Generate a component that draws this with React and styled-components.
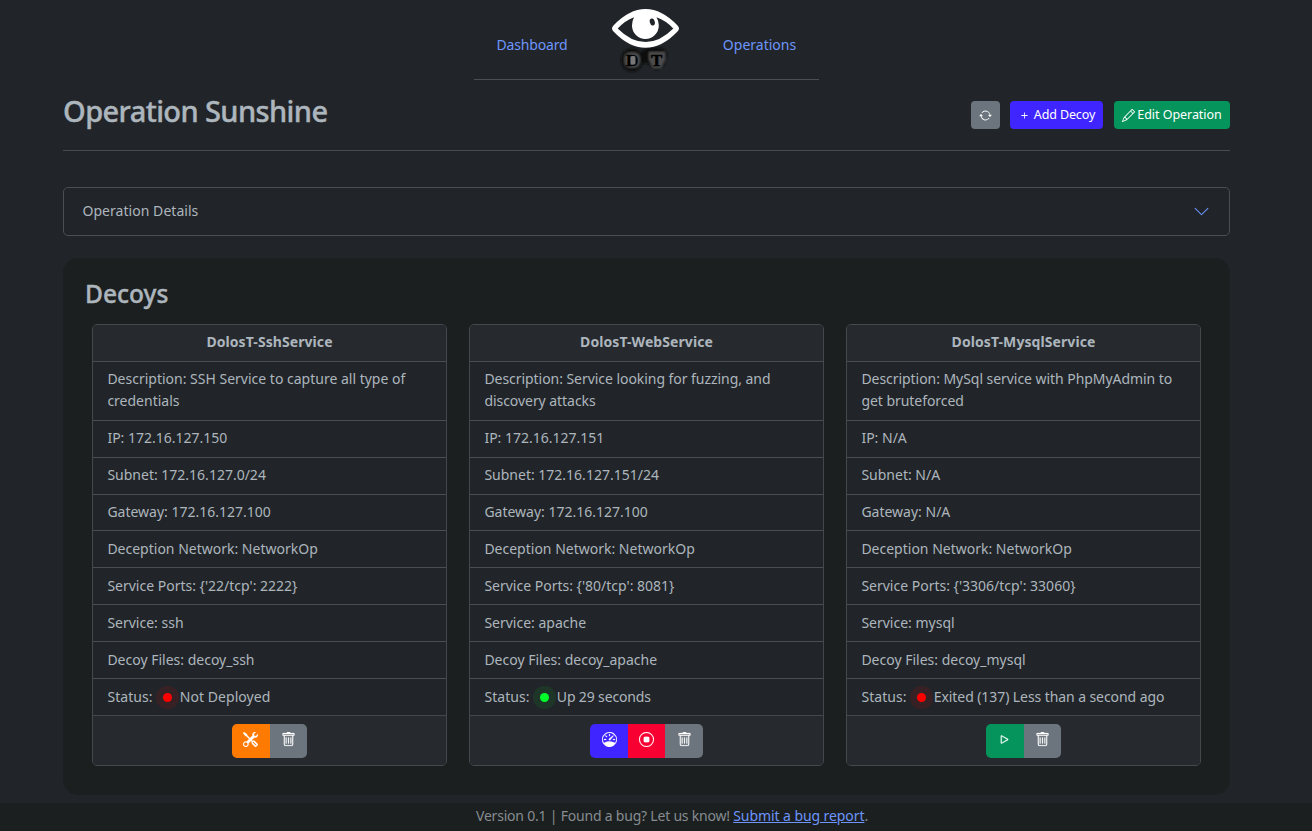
import React from "react";
import styled, { createGlobalStyle } from "styled-components";
import {
  BsArrowRepeat, BsPlus, BsPencil, BsTools, BsTrash, BsSpeedometer, BsStopCircle, BsPlay, BsChevronDown,
} from "react-icons/bs";

const Global = createGlobalStyle`
  *, *::before, *::after { box-sizing: border-box; }
  body {
    margin: 0;
    background: #212529;
    color: #adb5bd;
    font-family: "Noto Sans", "Open Sans", sans-serif;
    font-size: 14px;
    line-height: 22px;
    overflow: hidden;
  }
`;

const Fit = styled.span`
  letter-spacing: ${(p) => p.$ls || 0}px;
  white-space: nowrap;
`;

const Page = styled.div`
  height: 831px;
  display: flex;
  flex-direction: column;
`;

const Nav = styled.nav`
  width: 345px;
  height: 80px;
  margin-left: 474px;
  border-bottom: 1px solid #4a4f53;
  display: grid;
  grid-template-columns: 116px 110px 119px;
  align-items: center;
  justify-items: center;
`;

const NavLink = styled.a`
  color: #6d95fb;
  padding-top: 10px;
`;

const Logo = styled.svg`
  width: 90px;
  height: 80px;
  display: block;
`;

const Main = styled.main`
  width: 1167px;
  margin-left: 63px;
`;

const TitleBar = styled.header`
  height: 71px;
  border-bottom: 1px solid #474c50;
  display: flex;
  justify-content: space-between;
  align-items: flex-start;
`;

const Title = styled.h1`
  margin: 13px 0 0;
  font-size: 29px;
  line-height: 36px;
  font-weight: 500;
  -webkit-text-stroke: 0.4px currentColor;
`;

const Actions = styled.div`
  display: flex;
  padding-top: 21px;
`;

const SmallButton = styled.button`
  width: ${(p) => p.$w}px;
  height: 28px;
  margin-left: ${(p) => p.$gap || 0}px;
  padding: 0;
  border: 0;
  border-radius: 4px;
  background: ${(p) => p.$bg};
  color: #fff;
  font: inherit;
  font-size: 12.5px;
  display: flex;
  align-items: center;
  justify-content: center;
  gap: ${(p) => p.$inner || 0}px;
`;

const Accordion = styled.section`
  height: 49px;
  margin-top: 36px;
  padding: 0 19px 1px 18.5px;
  border: 1px solid #4a4f53;
  border-radius: 5px;
  display: flex;
  align-items: center;
  justify-content: space-between;
  svg { color: #6d95fb; margin-top: 1px; }
`;

const Panel = styled.section`
  height: 537px;
  margin-top: 22px;
  padding: 19px 29px 0;
  background: #1b1f1f;
  border-radius: 15px;
`;

const PanelTitle = styled.h2`
  margin: 0 0 13px -7px;
  font-size: 24.5px;
  line-height: 34px;
  font-weight: 500;
  -webkit-text-stroke: 0.4px currentColor;
`;

const Cards = styled.div`
  display: grid;
  grid-template-columns: repeat(3, 355px);
  gap: 22px;
`;

const Card = styled.article`
  height: 442px;
  border: 1px solid #43484c;
  border-radius: 5px;
  background: #212529;
  overflow: hidden;
  display: flex;
  flex-direction: column;
`;

const CardHead = styled.h3`
  margin: 0;
  height: 35.85px;
  background: #262a2e;
  font-size: 14px;
  line-height: 34px;
  font-weight: 700;
  text-align: center;
`;

const Row = styled.div`
  padding: 6.5px 14.4px 7.4px;
  border-top: 1px solid #494e53;
  display: flex;
  align-items: center;
`;

const StatusRow = styled(Row)`
  padding-top: 7px;
  padding-bottom: 6.9px;
`;

const Dot = styled.i`
  width: 9px;
  height: 9px;
  margin: 1px 7.8px 0 10.5px;
  border-radius: 50%;
  background: ${(p) => p.$color};
  box-shadow: 0 0 0 7px ${(p) => p.$halo};
`;

const CardFoot = styled.footer`
  flex: 1;
  padding-top: 8px;
  border-top: 1px solid #43484c;
  background: #262a2e;
  display: flex;
  justify-content: center;
  align-items: flex-start;
`;

const Group = styled.div`
  display: flex;
  border-radius: 5px;
  overflow: hidden;
`;

const GroupButton = styled.button`
  width: 37.5px;
  height: 34px;
  padding: 0 0 ${(p) => p.$lift || 2}px;
  border: 0;
  background: ${(p) => p.$bg};
  color: #fff;
  display: flex;
  align-items: center;
  justify-content: center;
  svg { stroke: #fff; stroke-width: 0.2; }
`;

const Footer = styled.footer`
  height: 28px;
  margin-top: 8px;
  background: #1b1f1f;
  color: #868c91;
  padding: 2px 0 0 476px;
  a { color: #6d95fb; text-decoration: underline; letter-spacing: -0.08px; }
`;

const gray = "#6c757d", blue = "#3f25ff", green = "#05945b", red = "#f80031", orange = "#ff7a00";

const tools = { bg: orange, Icon: BsTools, label: "Deploy" };
const trash = { bg: gray, Icon: BsTrash, label: "Delete", lift: 3 };
const stats = { bg: blue, Icon: BsSpeedometer, label: "Monitor" };
const stop = { bg: red, Icon: BsStopCircle, label: "Stop" };
const play = { bg: green, Icon: BsPlay, label: "Start" };

const decoys = [
  {
    name: "DolosT-SshService",
    description: ["Description: SSH Service to capture all type of", "credentials"],
    rows: ["IP: 172.16.127.150", "Subnet: 172.16.127.0/24", "Gateway: 172.16.127.100", "Deception Network: NetworkOp",
      "Service Ports: {'22/tcp': 2222}", "Service: ssh", "Decoy Files: decoy_ssh"],
    status: "Not Deployed", ls: 0.05, up: false, actions: [tools, trash],
  },
  {
    name: "DolosT-WebService",
    description: ["Description: Service looking for fuzzing, and", "discovery attacks"],
    descLs: -0.05,
    rows: ["IP: 172.16.127.151", "Subnet: 172.16.127.151/24", "Gateway: 172.16.127.100", "Deception Network: NetworkOp",
      "Service Ports: {'80/tcp': 8081}", "Service: apache", "Decoy Files: decoy_apache"],
    status: "Up 29 seconds", ls: -0.14, up: true, actions: [stats, stop, trash],
  },
  {
    name: "DolosT-MysqlService",
    description: ["Description: MySql service with PhpMyAdmin to", "get bruteforced"],
    descLs: -0.05,
    rows: ["IP: N/A", "Subnet: N/A", "Gateway: N/A", "Deception Network: NetworkOp",
      "Service Ports: {'3306/tcp': 33060}", "Service: mysql", "Decoy Files: decoy_mysql"],
    status: "Exited (137) Less than a second ago", ls: -0.08, up: false, actions: [play, trash],
  },
];

function EyeLogo() {
  return (
    <Logo viewBox="0 0 90 80">
      <defs>
        <filter id="soft" x="-30%" y="-30%" width="160%" height="160%"><feGaussianBlur stdDeviation="0.9" /></filter>
      </defs>
      <g filter="url(#soft)">
        <ellipse cx="32" cy="60" rx="11" ry="11.8" fill="#101111" />
        <path d="M40 53Q46 46.5 56 47.5Q67.5 47.5 67 55Q66 62 63.5 66Q57 73.5 50.5 66Q48 62 40 64Z" fill="#101111" />
        <rect x="24.5" y="52.5" width="15.5" height="15" rx="6" fill="#4e4e4e" />
        <path d="M49 52H65V60L61 68H53L49 60Z" fill="#4e4e4e" />
      </g>
      <g fontFamily="Liberation Serif, serif" fontWeight="700" fontSize="17" fill="#000" stroke="#000" strokeWidth="0.5">
        <text x="26" y="66">D</text>
        <text x="51" y="66">T</text>
      </g>
      <rect x="30.5" y="56" width="5" height="8.5" rx="1.5" fill="#777" />
      <path d="M12 28.5Q12 27 13.5 25.5Q29 9 45.5 9Q62 9 77.5 25.5Q79 27 79 28.5Q79 30 77.5 31.5Q62 47.8 45.5 47.8Q29 47.8 13.5 31.5Q12 30 12 28.5Z" fill="#fff" />
      <path d="M17.7 28.5Q25 20.5 34 17.2Q32 21 32 25.5A13.4 13.4 0 0 0 58.8 25.5Q58.8 21 56.5 17.2Q66 20.5 73.3 28.5Q60 42 45.5 42Q31 42 17.7 28.5Z" fill="#212529" />
      <ellipse cx="52.3" cy="22" rx="2.5" ry="3.5" transform="rotate(-14 52.3 22)" fill="#212529" />
    </Logo>
  );
}

function DecoyCard({ decoy }) {
  return (
    <Card>
      <CardHead><Fit $ls={0.08}>{decoy.name}</Fit></CardHead>
      <Row><Fit $ls={decoy.descLs}>{decoy.description[0]}<br />{decoy.description[1]}</Fit></Row>
      {decoy.rows.map((text) => <Row key={text}><Fit>{text}</Fit></Row>)}
      <StatusRow>
        <Fit $ls={0.05}>Status:</Fit>
        <Dot $color={decoy.up ? "#00ff2a" : "#ff0000"} $halo={decoy.up ? "rgba(0,255,42,.08)" : "rgba(255,0,0,.1)"} />
        <Fit $ls={decoy.ls}>{decoy.status}</Fit>
      </StatusRow>
      <CardFoot>
        <Group>
          {decoy.actions.map(({ bg, Icon, label, lift }) => (
            <GroupButton key={label} $bg={bg} $lift={lift} aria-label={label}><Icon size={15} /></GroupButton>
          ))}
        </Group>
      </CardFoot>
    </Card>
  );
}

export default function App() {
  return (
    <Page>
      <Global />
      <Nav>
        <NavLink><Fit $ls={-0.15}>Dashboard</Fit></NavLink>
        <EyeLogo />
        <NavLink><Fit>Operations</Fit></NavLink>
      </Nav>
      <Main>
        <TitleBar>
          <Title><Fit $ls={-0.6}>Operation Sunshine</Fit></Title>
          <Actions>
            <SmallButton $w={29} $bg={gray} aria-label="Refresh"><BsArrowRepeat size={13} /></SmallButton>
            <SmallButton $w={93} $gap={10} $inner={3} $bg={blue}><BsPlus size={13} /><Fit $ls={-0.12}>Add Decoy</Fit></SmallButton>
            <SmallButton $w={116} $gap={11} $inner={2} $bg={green}><BsPencil size={13} /><Fit $ls={-0.05}>Edit Operation</Fit></SmallButton>
          </Actions>
        </TitleBar>
        <Accordion><Fit $ls={0.04}>Operation Details</Fit><BsChevronDown size={17} /></Accordion>
        <Panel>
          <PanelTitle><Fit>Decoys</Fit></PanelTitle>
          <Cards>{decoys.map((d) => <DecoyCard key={d.name} decoy={d} />)}</Cards>
        </Panel>
      </Main>
      <Footer><Fit $ls={-0.21}>Version 0.1 | Found a bug? Let us know! <a>Submit a bug report</a>.</Fit></Footer>
    </Page>
  );
}
